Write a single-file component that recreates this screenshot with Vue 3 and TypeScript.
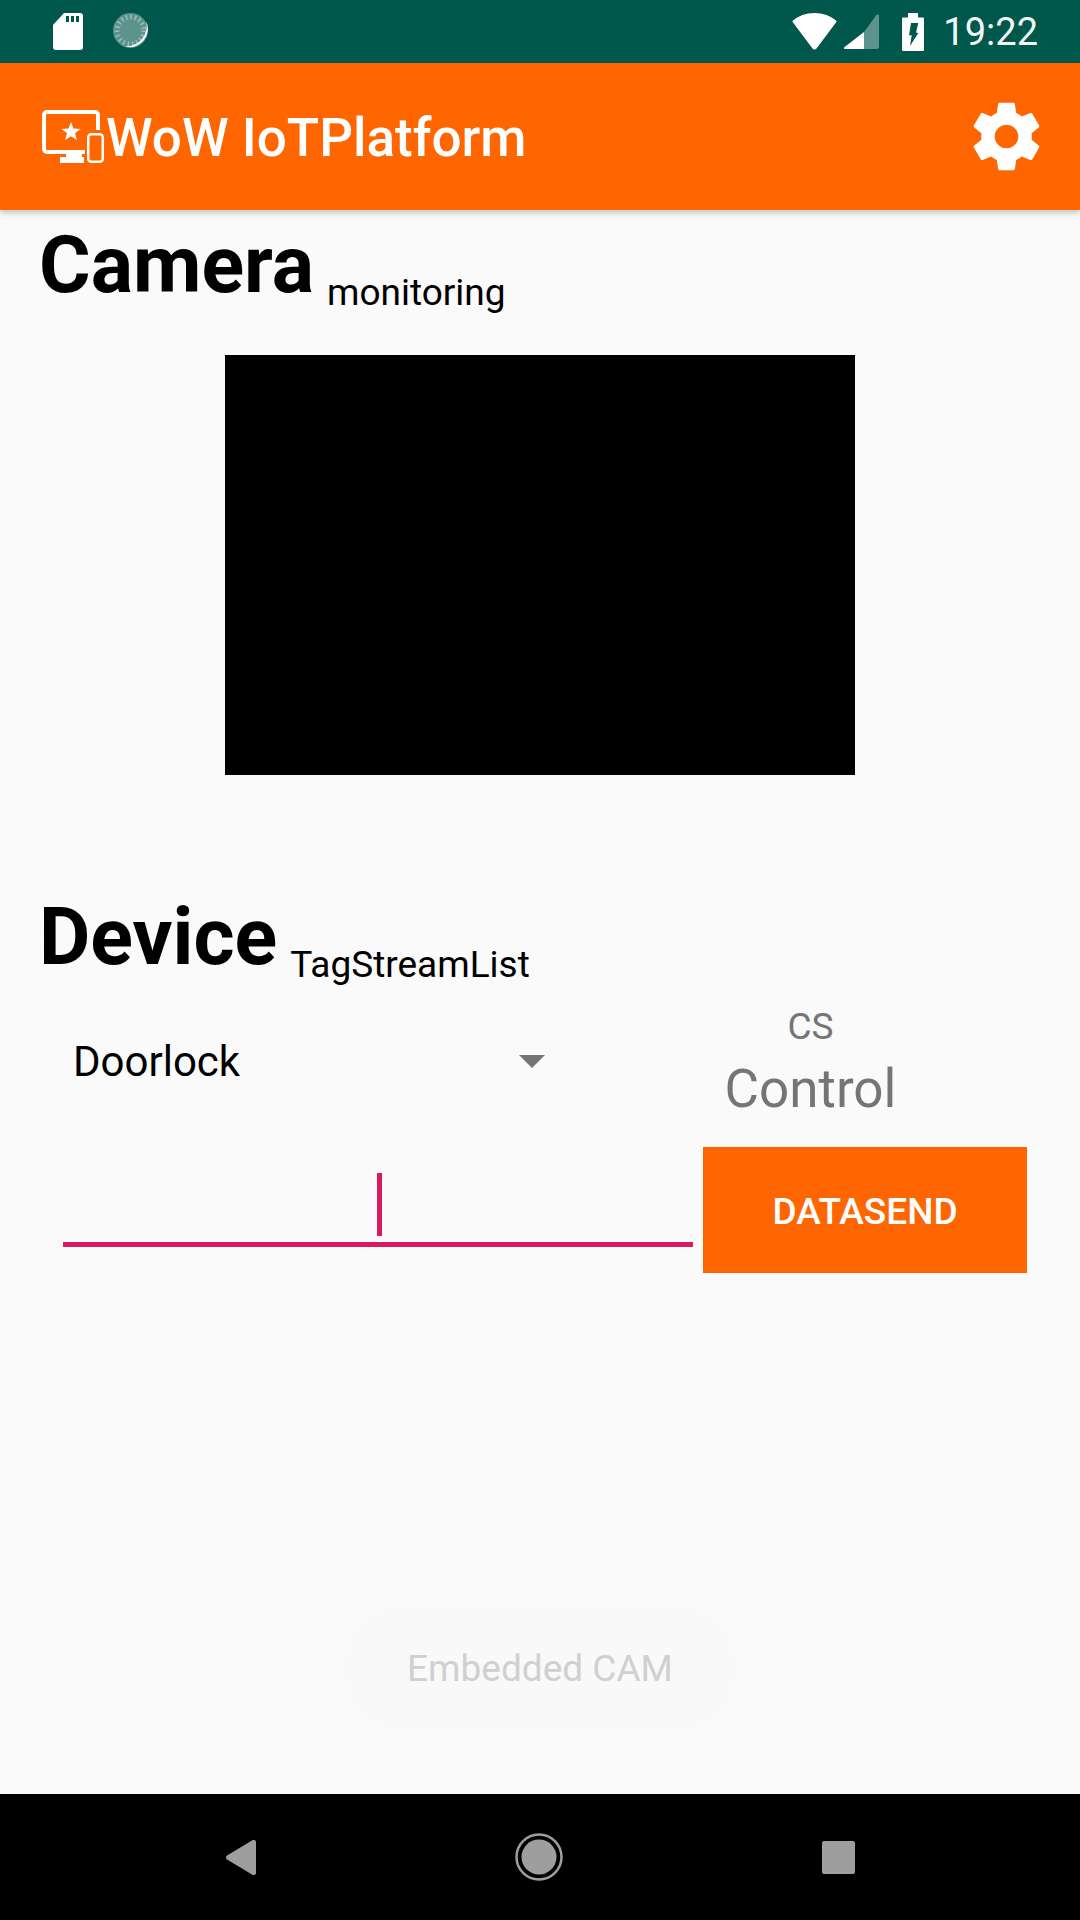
<script setup lang="ts">
import { ref } from 'vue';

const title = ref<string>('WoW IoTPlatform');
const selected = ref<string>('Doorlock');
const clock = ref<string>('19:22');
</script>

<template>
  <div class="screen">
    <div class="status-bar">
      <div class="status-left">
        <svg class="sd" viewBox="0 0 30 37" width="30" height="37">
          <path fill="#fff" fill-rule="evenodd" d="M11 0H27a3 3 0 0 1 3 3V34a3 3 0 0 1-3 3H3a3 3 0 0 1-3-3V12z M13 3v6h3V3z M18 3v6h3V3z M23 3v6h3V3z" />
        </svg>
        <svg class="sync" viewBox="0 0 37 37" width="37" height="37">
          <circle cx="17.500" cy="17.500" r="17.500" fill="#fff" opacity="0.36" />
          <circle cx="17.500" cy="17.500" r="13.500" fill="none" stroke="#fff" stroke-width="5" stroke-dasharray="1.500 3" opacity="0.4" />
          <path d="M33 8A18 18 0 0 1 11 33A20 20 0 0 0 33 8z" fill="#fff" />
        </svg>
      </div>
      <div class="status-right">
        <svg class="wifi" viewBox="0 0 45 37" width="45" height="37">
          <path fill="#fff" d="M22.500 0C14 0 6 3 1 7.500a1.500 1.500 0 0 0 0 2L20.500 35.500a2.500 2.500 0 0 0 4 0L44 9.500a1.500 1.500 0 0 0 0-2C39 3 31 0 22.500 0z" />
        </svg>
        <svg class="signal" viewBox="0 0 35 35" width="35" height="35">
          <path fill="#fff" opacity="0.36" d="M20 18L32 1.500a1.500 1.500 0 0 1 3 1V33a2 2 0 0 1-2 2H20z" />
          <path fill="#fff" d="M20 18V35H1a1 1 0 0 1-.7-1.700z" />
        </svg>
        <svg class="battery" viewBox="0 0 22 38" width="22" height="38">
          <path fill="#fff" fill-rule="evenodd" d="M6 0H16V4.500H21a1 1 0 0 1 1 1V37a1 1 0 0 1-1 1H1a1 1 0 0 1-1-1V5.500a1 1 0 0 1 1-1H6z M9 10H16.300L14 19.700H16.500L8 33L9.700 22.300H7z" />
        </svg>
        <span class="clock">{{ clock }}</span>
      </div>
    </div>

    <header class="app-bar">
      <svg class="logo" viewBox="0 0 63 53" width="63" height="53">
        <path fill="none" stroke="#fff" stroke-width="4" stroke-linejoin="round" d="M43 42H5a3 3 0 0 1-3-3V5a3 3 0 0 1 3-3H53a3 3 0 0 1 3 3V20" />
        <path fill="#fff" d="M24 43H40V47H42V53H18V47H24z" />
        <path fill="#fff" d="M29 12L31.500 18.600L38.500 18.900L33 23.300L34.900 30.100L29 26.200L23.100 30.100L25 23.300L19.500 18.900L26.500 18.600z" />
        <rect x="46.250" y="24.250" width="14.500" height="27.500" rx="3" fill="none" stroke="#fff" stroke-width="2.500" />
      </svg>
      <h1 class="app-title">{{ title }}</h1>
      <svg class="gear" viewBox="0 0 24 24" width="81" height="81">
        <path fill="#fff" d="M19.43 12.98c.04-.32.07-.64.07-.98s-.03-.66-.07-.98l2.11-1.65c.19-.15.24-.42.12-.64l-2-3.46c-.12-.22-.39-.3-.61-.22l-2.49 1c-.52-.4-1.08-.73-1.69-.98l-.38-2.65C14.46 2.18 14.25 2 14 2h-4c-.25 0-.46.18-.49.42l-.38 2.65c-.61.25-1.17.59-1.69.98l-2.49-1c-.23-.09-.49 0-.61.22l-2 3.46c-.13.22-.07.49.12.64l2.11 1.65c-.04.32-.07.65-.07.98s.03.66.07.98l-2.11 1.65c-.19.15-.24.42-.12.64l2 3.46c.12.22.39.3.61.22l2.49-1c.52.4 1.08.73 1.69.98l.38 2.65c.03.24.24.42.49.42h4c.25 0 .46-.18.49-.42l.38-2.65c.61-.25 1.17-.59 1.69-.98l2.49 1c.23.09.49 0 .61-.22l2-3.46c.12-.22.07-.49-.12-.64l-2.11-1.65zM12 15.500c-1.930 0-3.500-1.570-3.500-3.500s1.570-3.500 3.500-3.500 3.500 1.570 3.500 3.500-1.570 3.500-3.500 3.500z" />
      </svg>
    </header>

    <main class="content">
      <div class="section-head camera-head">
        <span class="head-big">Camera</span>
        <span class="head-small">monitoring</span>
      </div>
      <div class="video"></div>

      <div class="section-head device-head">
        <span class="head-big">Device</span>
        <span class="head-small">TagStreamList</span>
      </div>

      <div class="control-row">
        <div class="spinner">
          <span class="spinner-text">{{ selected }}</span>
          <span class="spinner-arrow"></span>
        </div>
        <div class="cs-box">
          <span class="cs-small">CS</span>
          <span class="cs-big">Control</span>
        </div>
      </div>

      <div class="send-row">
        <div class="input">
          <span class="caret"></span>
        </div>
        <button class="send-btn">DATASEND</button>
      </div>

      <button class="embedded-btn">Embedded CAM</button>
    </main>

    <nav class="nav-bar">
      <svg viewBox="0 0 30 35" width="30" height="35">
        <path fill="#9e9e9e" d="M26 .6A2.300 2.300 0 0 1 30 2V33a2.300 2.300 0 0 1-4 1.400L1 19.500a2.500 2.500 0 0 1 0-4z" />
      </svg>
      <svg viewBox="0 0 48 48" width="48" height="48">
        <circle cx="24" cy="24" r="22.500" fill="none" stroke="#9e9e9e" stroke-width="2.500" />
        <circle cx="24" cy="24" r="17.500" fill="#9e9e9e" />
      </svg>
      <span class="nav-square"></span>
    </nav>
  </div>
</template>

<style scoped>
.screen {
  width: 1080px;
  height: 1920px;
  display: flex;
  flex-direction: column;
  background: #fafafa;
  font-family: Roboto, "Liberation Sans", sans-serif;
  overflow: hidden;
}

.status-bar {
  height: 63px;
  flex: none;
  background: #00574b;
  display: flex;
  align-items: center;
  justify-content: space-between;
  padding: 0 42px 0 53px;
  box-sizing: border-box;
}

.status-left,
.status-right {
  display: flex;
  align-items: center;
}

.sync {
  margin-left: 30px;
}

.signal {
  margin-left: 7px;
}

.battery {
  margin-left: 23px;
}

.clock {
  margin-left: 19px;
  color: #fff;
  font-size: 38px;
  opacity: 0.95;
}

.app-bar {
  height: 147px;
  flex: none;
  background: #ff6600;
  display: flex;
  align-items: center;
  padding: 0 33px 0 42px;
  box-sizing: border-box;
  position: relative;
  z-index: 1;
  box-shadow: 0 3px 6px rgba(0, 0, 0, 0.22);
}

.app-title {
  margin: 3px 0 0 1px;
  flex: 1;
  color: #fff;
  font-size: 53px;
  font-weight: 500;
}

.content {
  flex: 1;
  display: flex;
  flex-direction: column;
}

.section-head {
  display: flex;
  align-items: flex-end;
  gap: 13px;
  padding-left: 39px;
}

.camera-head {
  margin-top: 9px;
}

.device-head {
  margin-top: 116px;
}

.head-big {
  font-size: 79px;
  font-weight: 700;
  color: #000;
}

.head-small {
  margin-bottom: -3px;
  font-size: 37px;
  color: #000;
}

.video {
  width: 630px;
  height: 420px;
  margin: 44px auto 0;
  background: #000;
}

.control-row {
  display: flex;
  height: 139px;
  margin-top: 25px;
}

.spinner {
  width: 630px;
  height: 107px;
  display: flex;
  align-items: center;
  justify-content: space-between;
  padding-left: 73px;
  box-sizing: border-box;
}

.spinner-text {
  font-size: 42px;
  color: #000;
}

.spinner-arrow {
  width: 0;
  height: 0;
  margin-right: 85px;
  border-left: 13px solid transparent;
  border-right: 13px solid transparent;
  border-top: 13px solid #757575;
}

.cs-box {
  flex: 1;
  display: flex;
  flex-direction: column;
  align-items: center;
  gap: 10px;
  margin-top: -3px;
  margin-right: 89px;
}

.cs-small {
  font-size: 37px;
  color: #757575;
}

.cs-big {
  font-size: 53px;
  color: #757575;
}

.send-row {
  display: flex;
  align-items: flex-start;
  padding-left: 63px;
}

.input {
  width: 630px;
  height: 100px;
  border-bottom: 5px solid #d81b60;
  display: flex;
  justify-content: center;
  box-sizing: border-box;
}

.caret {
  width: 5px;
  height: 63px;
  margin: 26px 0 0 2px;
  background: #d81b60;
}

.send-btn {
  width: 324px;
  height: 126px;
  margin-left: 10px;
  padding-top: 3px;
  border: none;
  background: #ff6600;
  color: #fff;
  font-family: inherit;
  font-size: 37px;
  font-weight: 500;
}

.embedded-btn {
  width: 394px;
  height: 129px;
  margin: 330px auto 0;
  padding-top: 2px;
  border: none;
  border-radius: 64px;
  background: #f9f9f9;
  color: #d0d0d0;
  font-family: inherit;
  font-size: 37px;
}

.nav-bar {
  height: 126px;
  flex: none;
  background: #000;
  display: flex;
  align-items: center;
  padding: 0 225px 0 226px;
  justify-content: space-between;
  box-sizing: border-box;
}

.nav-square {
  width: 33px;
  height: 33px;
  border-radius: 2px;
  background: #9e9e9e;
}
</style>

<style>
body {
  margin: 0;
}
</style>
